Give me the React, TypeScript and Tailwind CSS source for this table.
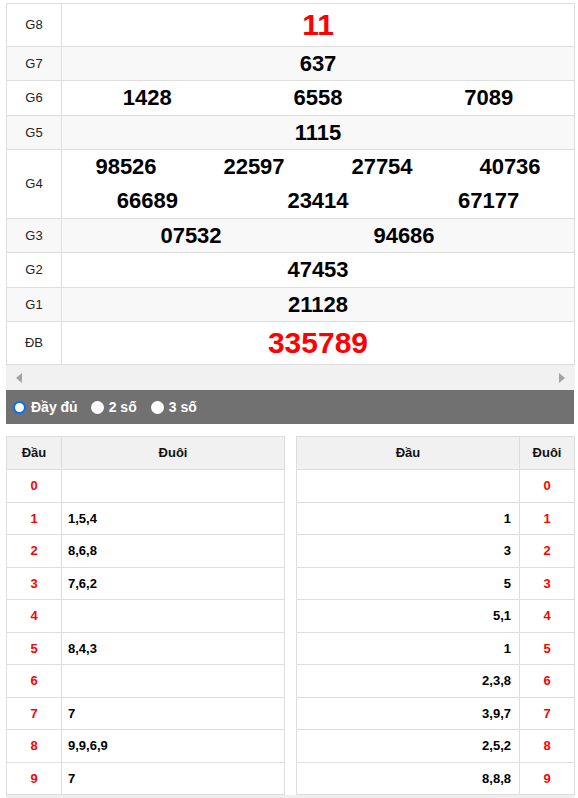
import React from "react";

const font = { fontFamily: '"Liberation Sans", Arial, sans-serif' };

function Label({ children }: { children: React.ReactNode }) {
  return (
    <div className="w-[55px] shrink-0 border-r border-[#dddddd] flex items-center justify-center text-[13px] text-[#222]">
      {children}
    </div>
  );
}

function Row({
  label,
  h,
  bg,
  children,
}: {
  label: string;
  h: string;
  bg: string;
  children: React.ReactNode;
}) {
  return (
    <div className={`flex border-b border-[#dddddd] ${h} ${bg}`}>
      <Label>{label}</Label>
      <div className="flex-1 flex flex-col justify-center">{children}</div>
    </div>
  );
}

const num = "text-center text-[22px] font-bold text-black leading-[34px]";

const heads: [string, string][] = [
  ["0", ""],
  ["1", "1,5,4"],
  ["2", "8,6,8"],
  ["3", "7,6,2"],
  ["4", ""],
  ["5", "8,4,3"],
  ["6", ""],
  ["7", "7"],
  ["8", "9,9,6,9"],
  ["9", "7"],
];

const tails: [string, string][] = [
  ["", "0"],
  ["1", "1"],
  ["3", "2"],
  ["5", "3"],
  ["5,1", "4"],
  ["1", "5"],
  ["2,3,8", "6"],
  ["3,9,7", "7"],
  ["2,5,2", "8"],
  ["8,8,8", "9"],
];

function Radio({ checked }: { checked?: boolean }) {
  return checked ? (
    <span className="w-[13px] h-[13px] rounded-full border-[2px] border-[#0a6cff] bg-white inline-block" />
  ) : (
    <span className="w-[13px] h-[13px] rounded-full bg-white inline-block" />
  );
}

export default function App() {
  return (
    <div className="bg-white w-[578px] h-[798px] overflow-hidden pt-[3px]" style={font}>
      <div className="ml-[6px] w-[569px] border-t border-l border-r border-[#dddddd]">
        <Row label="G8" h="h-[43px]" bg="bg-white">
          <div className="text-center text-[30px] font-bold text-[#ff0000] leading-[42px]">11</div>
        </Row>
        <Row label="G7" h="h-[34px]" bg="bg-[#f8f8f8]">
          <div className={num}>637</div>
        </Row>
        <Row label="G6" h="h-[35px]" bg="bg-white">
          <div className="grid grid-cols-3">
            <div className={num}>1428</div>
            <div className={num}>6558</div>
            <div className={num}>7089</div>
          </div>
        </Row>
        <Row label="G5" h="h-[34px]" bg="bg-[#f8f8f8]">
          <div className={num}>1115</div>
        </Row>
        <Row label="G4" h="h-[69px]" bg="bg-white">
          <div className="grid grid-cols-4">
            <div className={num}>98526</div>
            <div className={num}>22597</div>
            <div className={num}>27754</div>
            <div className={num}>40736</div>
          </div>
          <div className="grid grid-cols-3">
            <div className={num}>66689</div>
            <div className={num}>23414</div>
            <div className={num}>67177</div>
          </div>
        </Row>
        <Row label="G3" h="h-[34px]" bg="bg-[#f8f8f8]">
          <div className="grid grid-cols-[258px_168px_1fr]">
            <div className={num}>07532</div>
            <div className={num}>94686</div>
            <div />
          </div>
        </Row>
        <Row label="G2" h="h-[35px]" bg="bg-white">
          <div className={num}>47453</div>
        </Row>
        <Row label="G1" h="h-[34px]" bg="bg-[#f8f8f8]">
          <div className={num}>21128</div>
        </Row>
        <Row label="ĐB" h="h-[43px]" bg="bg-white">
          <div className="text-center text-[30px] font-bold text-[#ff0000] leading-[42px]">335789</div>
        </Row>
      </div>
      <div className="ml-[6px] w-[569px] h-[25px] bg-[#f1f1f1] flex items-center justify-between px-[10px]">
        <svg width="6" height="10" viewBox="0 0 6 10">
          <polygon points="6,0 0,5 6,10" fill="#a3a3a3" />
        </svg>
        <svg width="6" height="10" viewBox="0 0 6 10">
          <polygon points="0,0 6,5 0,10" fill="#a3a3a3" />
        </svg>
      </div>
      <div className="ml-[6px] w-[568px] h-[34px] bg-[#717171] flex items-center pl-[7px] text-white font-bold text-[14px]">
        <label className="flex items-center gap-[5px]">
          <Radio checked />
          <span>Đầy đủ</span>
        </label>
        <label className="flex items-center gap-[5px] ml-[13px]">
          <Radio />
          <span>2 số</span>
        </label>
        <label className="flex items-center gap-[5px] ml-[14px]">
          <Radio />
          <span>3 số</span>
        </label>
      </div>
      <div className="flex mt-[12px] ml-[6px] gap-[11px]">
        <div className="w-[279px] border-t border-l border-r border-[#dddddd] text-[13px] font-bold">
          <div className="flex h-[33px] bg-[#f1f1f1] border-b border-[#dddddd]">
            <div className="w-[55px] border-r border-[#dddddd] flex items-center justify-center text-[#111]">Đầu</div>
            <div className="flex-1 flex items-center justify-center text-[#111]">Đuôi</div>
          </div>
          {heads.map(([h, t]) => (
            <div key={h} className="flex h-[32.5px] border-b border-[#dddddd] bg-white">
              <div className="w-[55px] border-r border-[#dddddd] flex items-center justify-center text-[#ff0000]">{h}</div>
              <div className="flex-1 flex items-center pl-[6px] text-black">{t}</div>
            </div>
          ))}
        </div>
        <div className="w-[279px] border-t border-l border-r border-[#dddddd] text-[13px] font-bold">
          <div className="flex h-[33px] bg-[#f1f1f1] border-b border-[#dddddd]">
            <div className="flex-1 border-r border-[#dddddd] flex items-center justify-center text-[#111]">Đầu</div>
            <div className="w-[54px] flex items-center justify-center text-[#111]">Đuôi</div>
          </div>
          {tails.map(([h, t]) => (
            <div key={t} className="flex h-[32.5px] border-b border-[#dddddd] bg-white">
              <div className="flex-1 border-r border-[#dddddd] flex items-center justify-end pr-[8px] text-black">{h}</div>
              <div className="w-[54px] flex items-center justify-center text-[#ff0000]">{t}</div>
            </div>
          ))}
        </div>
      </div>
      <div className="ml-[6px] w-[568px] h-[6px] bg-[#efefef]" />
    </div>
  );
}
